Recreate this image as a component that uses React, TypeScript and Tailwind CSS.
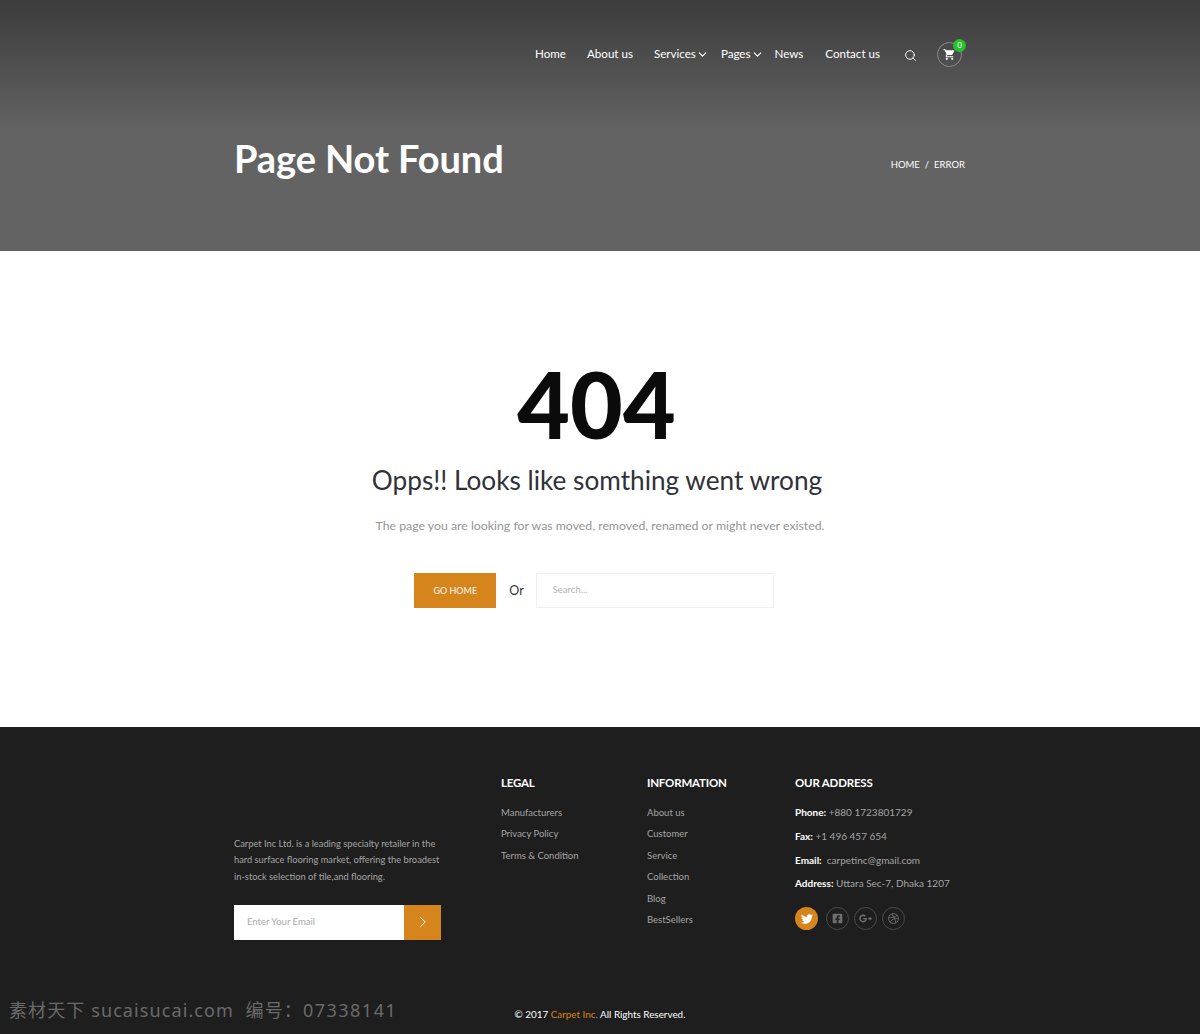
import React from 'react';
import { ChevronDown, ChevronRight, Search } from 'lucide-react';
import { FaDribbble, FaFacebookSquare, FaGooglePlusG, FaTwitter } from 'react-icons/fa';
import { MdShoppingCart } from 'react-icons/md';

const legalLinks = ['Manufacturers', 'Privacy Policy', 'Terms & Condition'];
const infoLinks = ['About us', 'Customer', 'Service', 'Collection', 'Blog', 'BestSellers'];

const NavLink = ({ label, caret, className }: { label: string; caret?: boolean; className: string }) => (
  <a className={`flex items-center text-[11.6px] text-white ${className}`}>
    {label}
    {caret && <ChevronDown className="w-[13px] h-[13px] mt-[1px]" strokeWidth={2} />}
  </a>
);

const Header = () => (
  <header className="h-[251px] bg-gradient-to-b from-[#3c3c3c] to-[#636363] from-0% to-[52%]">
    <div className="w-[732px] mx-auto">
      {/* Top nav */}
      <nav className="flex justify-end items-center pt-[29px] h-[79px] pr-[4px]">
        <NavLink label="Home" className="mr-[21px]" />
        <NavLink label="About us" className="mr-[21px]" />
        <NavLink label="Services" caret className="mr-[12px]" />
        <NavLink label="Pages" caret className="mr-[11px]" />
        <NavLink label="News" className="mr-[22px]" />
        <NavLink label="Contact us" className="mr-[24px]" />
        <Search className="w-[13px] h-[13px] text-white mr-[20px] mt-[2px]" strokeWidth={1.8} />
        <div className="relative w-[25px] h-[25px] rounded-full border border-[#8a8a8a] flex items-center justify-center">
          <MdShoppingCart className="w-[13px] h-[13px] text-white" />
          <span className="absolute -top-[4px] -right-[5px] w-[13px] h-[13px] rounded-full bg-[#27c02f] text-white text-[8px] leading-[13px] text-center">
            0
          </span>
        </div>
      </nav>
      {/* Title row */}
      <div className="flex justify-between items-start mt-[55px]">
        <h1 className="text-[38px] leading-[48px] font-bold text-white tracking-[-0.1px]">Page Not Found</h1>
        <div className="flex text-[9.5px] text-white mt-[24px] gap-[5px] mr-px">
          <span>HOME</span>
          <span>/</span>
          <span>ERROR</span>
        </div>
      </div>
    </div>
  </header>
);

const NotFound = () => (
  <main className="h-[476px] bg-white flex flex-col items-center pt-[100px]">
    <div className="text-[91px] leading-[106px] font-black text-[#0b0b0b] -ml-[7px]">404</div>
    <h2 className="text-[26.2px] leading-[32px] text-[#2f3238] mt-[7px] -ml-[6px]">Opps!! Looks like somthing went wrong</h2>
    <p className="text-[12.3px] leading-[20px] text-[#949494] mt-[20px]">
      The page you are looking for was moved, removed, renamed or might never existed.
    </p>
    <div className="flex items-center mt-[37px] -ml-[12px]">
      <button className="w-[82px] h-[35px] bg-[#d6851c] text-[#f5f0e6] text-[9px] font-medium">GO HOME</button>
      <span className="text-[12.5px] text-[#333333] ml-[13px] mr-[12px] mt-[1px]">Or</span>
      <div className="w-[238px] h-[35px] border border-[#f0f0f0] flex items-center pl-[16px] text-[9.5px] text-[#b5b5b5]">
        Search...
      </div>
    </div>
  </main>
);

const SocialIcon = ({ children, active }: { children: React.ReactNode; active?: boolean }) => (
  <div
    className={`w-[23px] h-[23px] rounded-full flex items-center justify-center ${
      active ? 'bg-[#d6851c] text-white mr-[3px]' : 'border border-[#4a4a4a] text-[#6f6f6f]'
    }`}
  >
    {children}
  </div>
);

const Footer = () => (
  <footer className="relative h-[307px] bg-[#1e1e1e]">
    <div className="w-[732px] mx-auto flex pt-[48px]">
      {/* About + newsletter */}
      <div className="w-[267px] pt-[61px]">
        <p className="text-[9.3px] leading-[16.3px] text-[#a5a5a5] w-[215px]">
          Carpet Inc Ltd. is a leading specialty retailer in the hard surface flooring market, offering the broadest
          in-stock selection of tile,and flooring.
        </p>
        <div className="flex w-[207px] h-[35px] mt-[20px]">
          <div className="flex-1 bg-white flex items-center pl-[13px] text-[9.5px] text-[#aaaaaa]">Enter Your Email</div>
          <div className="w-[37px] bg-[#d6851c] flex items-center justify-center">
            <ChevronRight className="w-[18px] h-[18px] text-white" strokeWidth={1.3} />
          </div>
        </div>
      </div>

      <div className="w-[146px]">
        <h3 className="text-[11.5px] leading-[16px] font-bold text-white tracking-[-0.2px]">LEGAL</h3>
        <ul className="mt-[11px]">
          {legalLinks.map((item) => (
            <li key={item} className="text-[9.5px] leading-[21.4px] text-[#a5a5a5]">{item}</li>
          ))}
        </ul>
      </div>

      <div className="w-[148px]">
        <h3 className="text-[11.5px] leading-[16px] font-bold text-white tracking-[-0.2px]">INFORMATION</h3>
        <ul className="mt-[11px]">
          {infoLinks.map((item) => (
            <li key={item} className="text-[9.5px] leading-[21.4px] text-[#a5a5a5]">{item}</li>
          ))}
        </ul>
      </div>

      <div className="flex-1">
        <h3 className="text-[11.5px] leading-[16px] font-bold text-white tracking-[-0.2px]">OUR ADDRESS</h3>
        <div className="mt-[10px] text-[10px] leading-[23.8px] text-[#a5a5a5] whitespace-nowrap">
          <div><b className="text-white">Phone:</b> +880 1723801729</div>
          <div><b className="text-white">Fax:</b> +1 496 457 654</div>
          <div><b className="text-white">Email:</b>&nbsp; carpetinc@gmail.com</div>
          <div><b className="text-white">Address:</b> Uttara Sec-7, Dhaka 1207</div>
        </div>
        <div className="flex gap-[5px] mt-[11px]">
          <SocialIcon active><FaTwitter className="w-[12px] h-[12px]" /></SocialIcon>
          <SocialIcon><FaFacebookSquare className="w-[11px] h-[11px]" /></SocialIcon>
          <SocialIcon><FaGooglePlusG className="w-[13px] h-[13px]" /></SocialIcon>
          <SocialIcon><FaDribbble className="w-[11px] h-[11px]" /></SocialIcon>
        </div>
      </div>
    </div>

    <div className="absolute left-0 right-0 top-[279px] text-center text-[9.9px] leading-[16px] text-white">
      © 2017 <span className="text-[#d6851c]">Carpet Inc.</span> All Rights Reserved.
    </div>

    {/* watermark over the footer */}
    <div className="absolute left-[9px] top-[271px] text-[18px] leading-[24px] tracking-[1.1px] text-[#6a6a6a] whitespace-nowrap font-['Noto_Sans','Noto_Sans_CJK_SC',sans-serif]">
      素材天下 sucaisucai.com&nbsp; 编号：<span className="tracking-[1.5px]">07338141</span>
    </div>
  </footer>
);

export default function App() {
  return (
    <div className="w-[1200px] font-['Lato',sans-serif]">
      <Header />
      <NotFound />
      <Footer />
    </div>
  );
}
